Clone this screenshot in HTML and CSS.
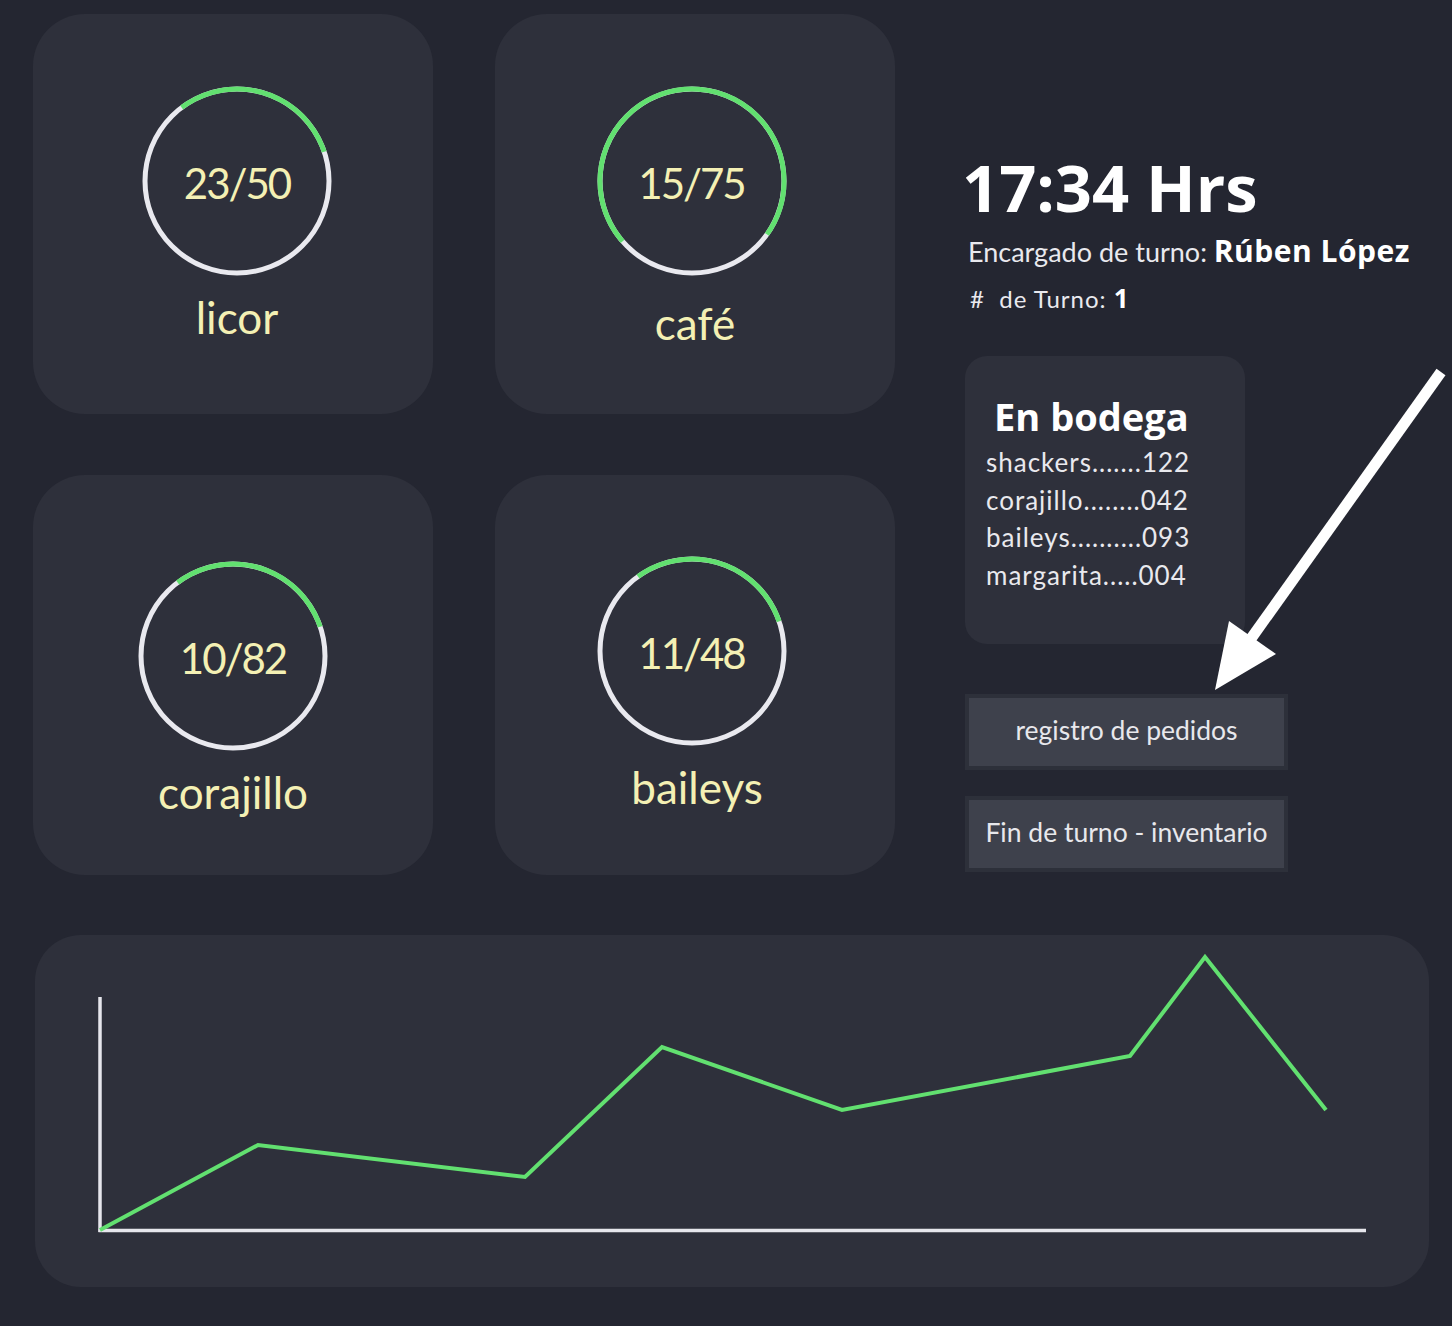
FILE: index.html
```html
<!DOCTYPE html>
<html lang="es">
<head>
<meta charset="utf-8">
<title>Panel de turno</title>
<link rel="stylesheet" href="styles.css">
</head>
<body>
<div class="page">
  <div class="top">
    <div class="grid">
      <div class="card card--up card--right">
        <div class="ring">
          <svg class="ring-svg" width="190" height="190" viewBox="0 0 190 190">
            <circle cx="95" cy="95" r="92" fill="none" stroke="#e9e9ef" stroke-width="5"/>
            <circle cx="95" cy="95" r="92" fill="none" stroke="#62e070" stroke-width="5" stroke-dasharray="174 600" transform="rotate(-127 95 95)"/>
          </svg>
          <span class="ring-num">23/50</span>
        </div>
        <div class="label">licor</div>
      </div>
      <div class="card card--up">
        <div class="ring ring--left">
          <svg class="ring-svg" width="190" height="190" viewBox="0 0 190 190">
            <circle cx="95" cy="95" r="92" fill="none" stroke="#e9e9ef" stroke-width="5"/>
            <circle cx="95" cy="95" r="92" fill="none" stroke="#62e070" stroke-width="5" stroke-dasharray="411 600" transform="rotate(139 95 95)"/>
          </svg>
          <span class="ring-num">15/75</span>
        </div>
        <div class="label label--low">café</div>
      </div>
      <div class="card card--down">
        <div class="ring">
          <svg class="ring-svg" width="190" height="190" viewBox="0 0 190 190">
            <circle cx="95" cy="95" r="92" fill="none" stroke="#e9e9ef" stroke-width="5"/>
            <circle cx="95" cy="95" r="92" fill="none" stroke="#62e070" stroke-width="5" stroke-dasharray="174 600" transform="rotate(-127 95 95)"/>
          </svg>
          <span class="ring-num">10/82</span>
        </div>
        <div class="label">corajillo</div>
      </div>
      <div class="card card--mid">
        <div class="ring ring--left">
          <svg class="ring-svg" width="190" height="190" viewBox="0 0 190 190">
            <circle cx="95" cy="95" r="92" fill="none" stroke="#e9e9ef" stroke-width="5"/>
            <circle cx="95" cy="95" r="92" fill="none" stroke="#62e070" stroke-width="5" stroke-dasharray="172 600" transform="rotate(-126 95 95)"/>
          </svg>
          <span class="ring-num">11/48</span>
        </div>
        <div class="label label--right">baileys</div>
      </div>
    </div>

    <div class="side">
      <div class="time">17:34 Hrs</div>
      <div class="manager">Encargado de turno: <strong>Rúben López</strong></div>
      <div class="shift">#&nbsp; de Turno: <strong>1</strong></div>

      <div class="stock">
        <div class="stock-title">En bodega</div>
        <div class="stock-item">shackers.......122</div>
        <div class="stock-item">corajillo........042</div>
        <div class="stock-item">baileys..........093</div>
        <div class="stock-item">margarita.....004</div>
      </div>

      <div class="btn">registro de pedidos</div>
      <div class="btn">Fin de turno - inventario</div>
    </div>
  </div>

  <div class="chart-card">
    <svg class="chart" width="1394" height="352" viewBox="35 935 1394 352">
      <line x1="100" y1="997" x2="100" y2="1232" stroke="#e6e6ec" stroke-width="3.5"/>
      <line x1="98.5" y1="1230.5" x2="1366" y2="1230.5" stroke="#e6e6ec" stroke-width="3.5"/>
      <polyline points="100,1230 258,1145 525,1177 662,1047 842,1110 1130,1056 1205,957 1326,1110" fill="none" stroke="#62e070" stroke-width="4" stroke-linejoin="miter"/>
    </svg>
  </div>

  <svg class="arrow" width="260" height="340" viewBox="1200 365 260 340">
    <line x1="1441" y1="372" x2="1250" y2="640" stroke="#ffffff" stroke-width="11"/>
    <polygon points="1215,690 1229,621 1276,654" fill="#ffffff"/>
  </svg>
</div>
</body>
</html>
```

FILE: styles.css
```css
* { box-sizing: border-box; }

html, body {
  margin: 0;
  padding: 0;
  background: #242631;
}

body {
  font-family: Lato, "Noto Sans", sans-serif;
  color: #e9e9ee;
  width: 1452px;
  height: 1326px;
  overflow: hidden;
}

.page {
  position: relative;
  padding: 14px 0 0 33px;
}

.top {
  display: flex;
  align-items: flex-start;
}

.grid {
  display: grid;
  grid-template-columns: 400px 400px;
  grid-auto-rows: 400px;
  column-gap: 62px;
  row-gap: 61px;
}

.card {
  background: #2e303b;
  border-radius: 52px;
  display: flex;
  flex-direction: column;
  align-items: center;
}

.card--up { padding-top: 72px; }
.card--down { padding-top: 86px; }
.card--mid { padding-top: 81px; }
.card--right { padding-left: 8px; }

.ring {
  display: grid;
  width: 190px;
  height: 190px;
}

.ring--left { margin-right: 7px; }

.ring-svg,
.ring-num {
  grid-area: 1 / 1;
}

.ring-num {
  align-self: center;
  justify-self: center;
  font-size: 42px;
  letter-spacing: -2px;
  color: #f4f0b4;
  line-height: 1;
  margin-top: 4px;
}

.label {
  margin-top: 19px;
  font-size: 44px;
  line-height: 44px;
  color: #f4f0b4;
}

.label--low { margin-top: 25px; }
.label--right { margin-left: 4px; }

.side {
  margin-left: 70px;
  margin-top: 140px;
  width: 480px;
  display: flex;
  flex-direction: column;
  align-items: flex-start;
}

.time {
  font-family: "Open Sans", Lato, sans-serif;
  font-size: 65px;
  line-height: 66px;
  font-weight: 700;
  color: #ffffff;
  margin-left: -3px;
}

.manager {
  margin-top: 13px;
  font-size: 27px;
  line-height: 36px;
  padding-left: 3px;
}

.manager strong,
.shift strong {
  font-family: "Open Sans", Lato, sans-serif;
  font-weight: 700;
  color: #ffffff;
}

.manager strong { font-size: 30px; letter-spacing: 0.5px; }

.shift {
  margin-top: 13px;
  font-size: 24px;
  letter-spacing: 1px;
  line-height: 30px;
  padding-left: 5px;
}

.shift strong { font-size: 26px; letter-spacing: 0; }

.stock {
  margin-top: 42px;
  width: 280px;
  height: 288px;
  background: #2e303b;
  border-radius: 22px;
  padding: 38px 0 0 21px;
}

.stock-title {
  font-family: "Open Sans", Lato, sans-serif;
  font-size: 38px;
  line-height: 44px;
  font-weight: 700;
  color: #ffffff;
  padding-left: 8px;
  margin-bottom: 6px;
}

.stock-item {
  font-size: 26px;
  letter-spacing: 1px;
  line-height: 37.5px;
}

.btn {
  width: 323px;
  height: 76px;
  background: #3e414c;
  border: 4px solid #2d303a;
  display: flex;
  align-items: center;
  justify-content: center;
  font-size: 26.5px;
  color: #e8e8ec;
  padding-bottom: 4px;
}

.stock + .btn { margin-top: 50px; }
.btn + .btn { margin-top: 26px; }

.chart-card {
  margin-top: 60px;
  margin-left: 2px;
  width: 1394px;
  height: 352px;
  background: #2e303b;
  border-radius: 46px;
}

.chart { display: block; }

.arrow {
  position: absolute;
  left: 1200px;
  top: 365px;
}
```
